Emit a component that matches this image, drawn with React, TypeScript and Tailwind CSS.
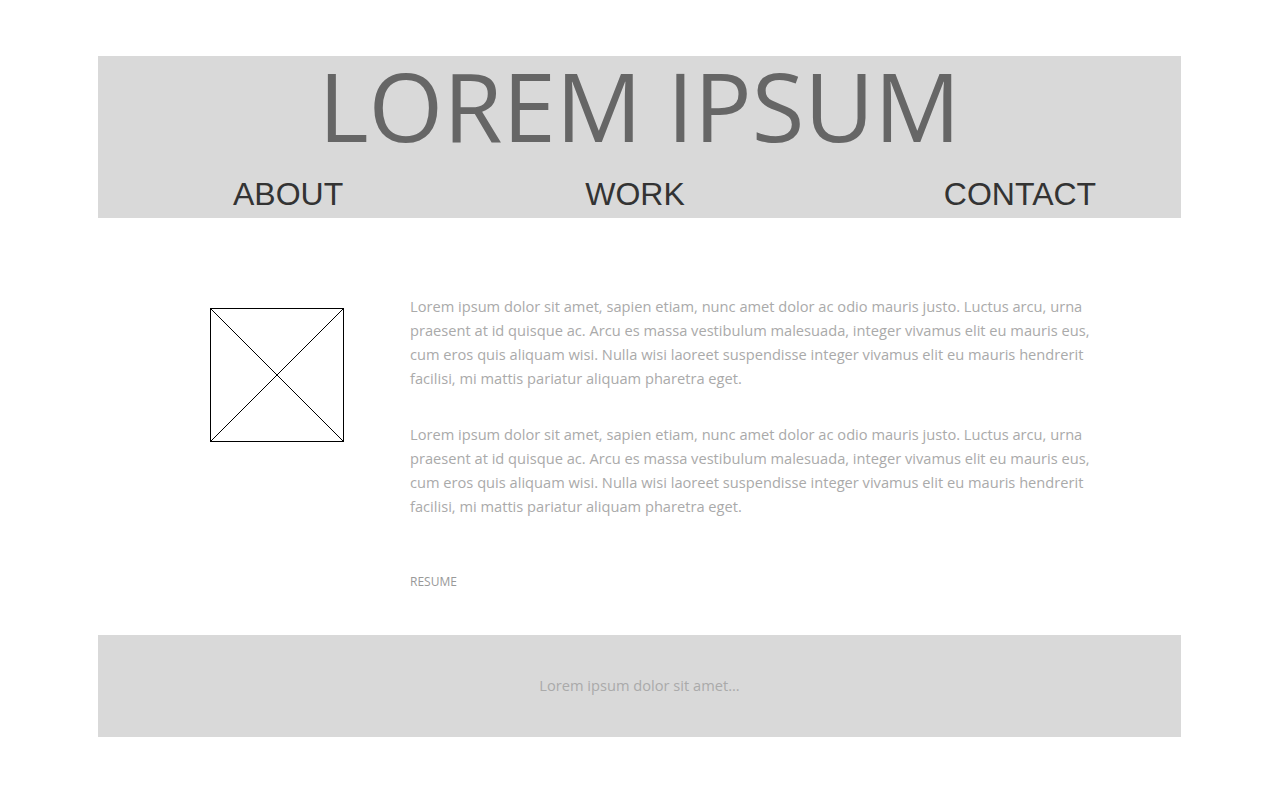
const paragraph =
  "Lorem ipsum dolor sit amet, sapien etiam, nunc amet dolor ac odio mauris justo. Luctus arcu, urna praesent at id quisque ac. Arcu es massa vestibulum malesuada, integer vivamus elit eu mauris eus, cum eros quis aliquam wisi. Nulla wisi laoreet suspendisse integer vivamus elit eu mauris hendrerit facilisi, mi mattis pariatur aliquam pharetra eget.";

const ImagePlaceholder = () => {
  return (
    <div className="w-[134px] h-[134px] border border-black bg-white">
      <svg width="132" height="132" viewBox="0 0 132 132" className="block">
        <line x1="0" y1="0" x2="132" y2="132" stroke="#000" strokeWidth="1" />
        <line x1="132" y1="0" x2="0" y2="132" stroke="#000" strokeWidth="1" />
      </svg>
    </div>
  );
};

const App = () => {
  return (
    <div className="min-h-[800px] bg-white font-['Open_Sans',sans-serif]">
      <div className="w-[1083px] ml-[98px] pt-[56px]">
        {/* header */}
        <header className="bg-[#d9d9d9] pt-px pb-[8px]">
          <h1 className="text-center text-[96px] leading-none text-[#666666] font-normal">
            LOREM IPSUM
          </h1>
          <nav className="flex mt-[25px] pl-[135px] font-['Liberation_Sans',Arial,sans-serif] text-[32px] leading-none text-[#333333]">
            <a className="w-[110px] text-center">ABOUT</a>
            <a className="ml-[242px] w-[100px] text-center">WORK</a>
            <a className="ml-[258px] w-[154px] text-center">CONTACT</a>
          </nav>
        </header>

        {/* content */}
        <main className="flex mt-[76px]">
          <div className="ml-[112px] mt-[14px]">
            <ImagePlaceholder />
          </div>
          <div className="ml-[66px] w-[690px] text-[14.65px] leading-[24px] text-[#aaaaaa]">
            <p>{paragraph}</p>
            <p className="mt-[32px]">{paragraph}</p>
            <p className="mt-[56px] text-[12px] leading-[16px] text-[#999999]">RESUME</p>
          </div>
        </main>

        {/* footer */}
        <footer className="mt-[45px] h-[102px] bg-[#d9d9d9] flex items-center justify-center">
          <p className="text-[14.65px] text-[#aaaaaa]">Lorem ipsum dolor sit amet...</p>
        </footer>
      </div>
    </div>
  );
};

export default App;
